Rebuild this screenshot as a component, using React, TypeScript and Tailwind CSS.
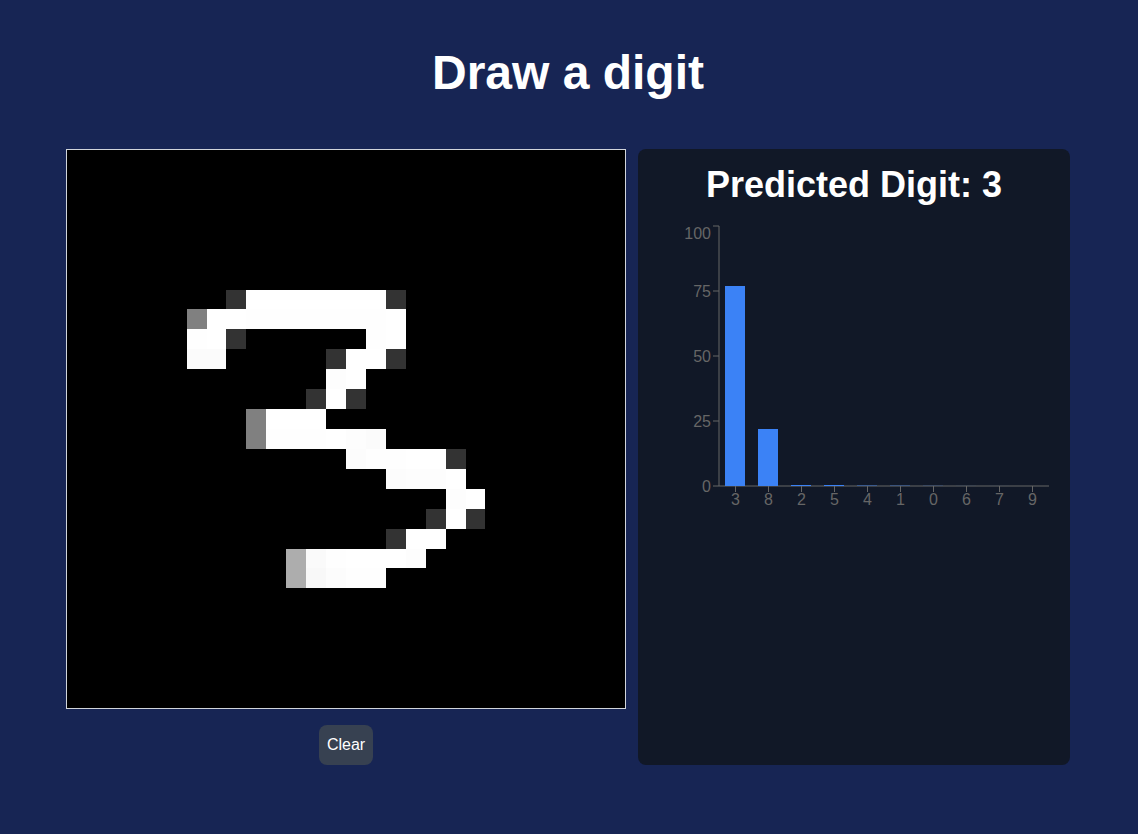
import React from "react";

const SIZE = 28;

// Pixel runs of the drawing: [row, column, length, fill class]
const RUNS: [number, number, number, string][] = [
  [7, 8, 1, "fill-[#333333]"], [7, 9, 7, "fill-white"], [7, 16, 1, "fill-[#333333]"],
  [8, 6, 1, "fill-[#808080]"], [8, 7, 2, "fill-white"], [8, 9, 7, "fill-[#fefefe]"], [8, 16, 1, "fill-white"],
  [9, 6, 1, "fill-[#fefefe]"], [9, 7, 1, "fill-white"], [9, 8, 1, "fill-[#333333]"], [9, 15, 1, "fill-[#fefefe]"], [9, 16, 1, "fill-white"],
  [10, 6, 2, "fill-[#fbfbfb]"], [10, 13, 1, "fill-[#333333]"], [10, 14, 2, "fill-white"], [10, 16, 1, "fill-[#333333]"],
  [11, 13, 1, "fill-[#fdfdfd]"], [11, 14, 1, "fill-white"],
  [12, 12, 1, "fill-[#333333]"], [12, 13, 1, "fill-white"], [12, 14, 1, "fill-[#333333]"],
  [13, 9, 1, "fill-[#808080]"], [13, 10, 3, "fill-white"],
  [14, 9, 1, "fill-[#808080]"], [14, 10, 3, "fill-[#fefefe]"], [14, 13, 1, "fill-white"], [14, 14, 1, "fill-[#fdfdfd]"], [14, 15, 1, "fill-[#fbfbfb]"],
  [15, 14, 1, "fill-[#fcfcfc]"], [15, 15, 2, "fill-[#fefefe]"], [15, 17, 2, "fill-white"], [15, 19, 1, "fill-[#333333]"],
  [16, 16, 1, "fill-[#fcfcfc]"], [16, 17, 2, "fill-[#fdfdfd]"], [16, 19, 1, "fill-white"],
  [17, 19, 1, "fill-[#fdfdfd]"], [17, 20, 1, "fill-white"],
  [18, 18, 1, "fill-[#333333]"], [18, 19, 1, "fill-white"], [18, 20, 1, "fill-[#333333]"],
  [19, 16, 1, "fill-[#333333]"], [19, 17, 2, "fill-white"],
  [20, 11, 1, "fill-[#adadad]"], [20, 12, 1, "fill-[#fafafa]"], [20, 13, 1, "fill-[#fefefe]"], [20, 14, 3, "fill-white"], [20, 17, 1, "fill-[#fdfdfd]"],
  [21, 11, 1, "fill-[#adadad]"], [21, 12, 1, "fill-[#f8f8f8]"], [21, 13, 1, "fill-[#fcfcfc]"], [21, 14, 2, "fill-[#fefefe]"],
];

const CANVAS = 558;

// Cell edges on whole pixels, symmetric about the middle of the canvas
const edge = (i: number): number =>
  i <= SIZE / 2 ? Math.round((i * CANVAS) / SIZE) : CANVAS - edge(SIZE - i);

function DigitCanvas() {
  return (
    <div className="size-[560px] border border-[#d1d5db] bg-black">
      <svg width={CANVAS} height={CANVAS} className="block" shapeRendering="crispEdges">
        {RUNS.map(([row, col, len, fill]) => (
          <rect
            key={`${row}-${col}`}
            x={edge(col)}
            y={edge(row)}
            width={edge(col + len) - edge(col)}
            height={edge(row + 1) - edge(row)}
            className={fill}
          />
        ))}
      </svg>
    </div>
  );
}

const DATA = [
  { digit: 3, value: 77 },
  { digit: 8, value: 22 },
  { digit: 2, value: 0.385 },
  { digit: 5, value: 0.385 },
  { digit: 4, value: 0.16 },
  { digit: 1, value: 0.12 },
  { digit: 0, value: 0.06 },
  { digit: 6, value: 0.02 },
  { digit: 7, value: 0.01 },
  { digit: 9, value: 0 },
];

const TICKS = [0, 25, 50, 75, 100];

// Large bars end on whole pixels; tiny ones keep their fractional height
const barHeight = (value: number) => (value > 1 ? Math.round(value * 2.6) : value * 2.6);

function Chart() {
  return (
    <svg width="400" height="300" className="block text-base">
      <g stroke="#666" fill="none">
        <line x1="65" x2="395" y1="265" y2="265" />
        <line x1="65" x2="65" y1="5" y2="265" />
        {DATA.map((d, i) => (
          <line key={d.digit} x1={81.5 + i * 33} x2={81.5 + i * 33} y1="265" y2="271" />
        ))}
        {TICKS.map((t) => (
          <line key={t} x1="59" x2="65" y1={265 - t * 2.6} y2={265 - t * 2.6} />
        ))}
      </g>
      <g fill="#666">
        {DATA.map((d, i) => (
          <text key={d.digit} x={81.5 + i * 33} y="273" dy="0.71em" textAnchor="middle">
            {d.digit}
          </text>
        ))}
        {TICKS.map((t) => (
          <text key={t} x="57" y={Math.max(265 - t * 2.6, 12)} dy="0.355em" textAnchor="end">
            {t}
          </text>
        ))}
      </g>
      <g fill="#3b82f6">
        {DATA.map((d, i) => (
          <rect key={d.digit} x={71 + i * 33} y={265 - barHeight(d.value)} width="20" height={barHeight(d.value)} />
        ))}
      </g>
    </svg>
  );
}

export default function App() {
  return (
    <main className="flex h-[834px] w-full flex-col items-center bg-[#172554] pt-[49px] pr-0.5 font-['Liberation_Sans',sans-serif] text-white">
      <h1 className="text-5xl leading-none font-bold">Draw a digit</h1>
      <div className="mt-[52px] flex gap-3">
        <section className="flex flex-col items-center gap-4">
          <DigitCanvas />
          <button className="h-10 rounded-lg bg-[#374151] px-2 text-base">Clear</button>
        </section>
        <section className="flex w-[432px] flex-col gap-4 rounded-lg bg-[#111827] p-4">
          <h2 className="text-center text-4xl font-bold">Predicted Digit: 3</h2>
          <Chart />
        </section>
      </div>
    </main>
  );
}
